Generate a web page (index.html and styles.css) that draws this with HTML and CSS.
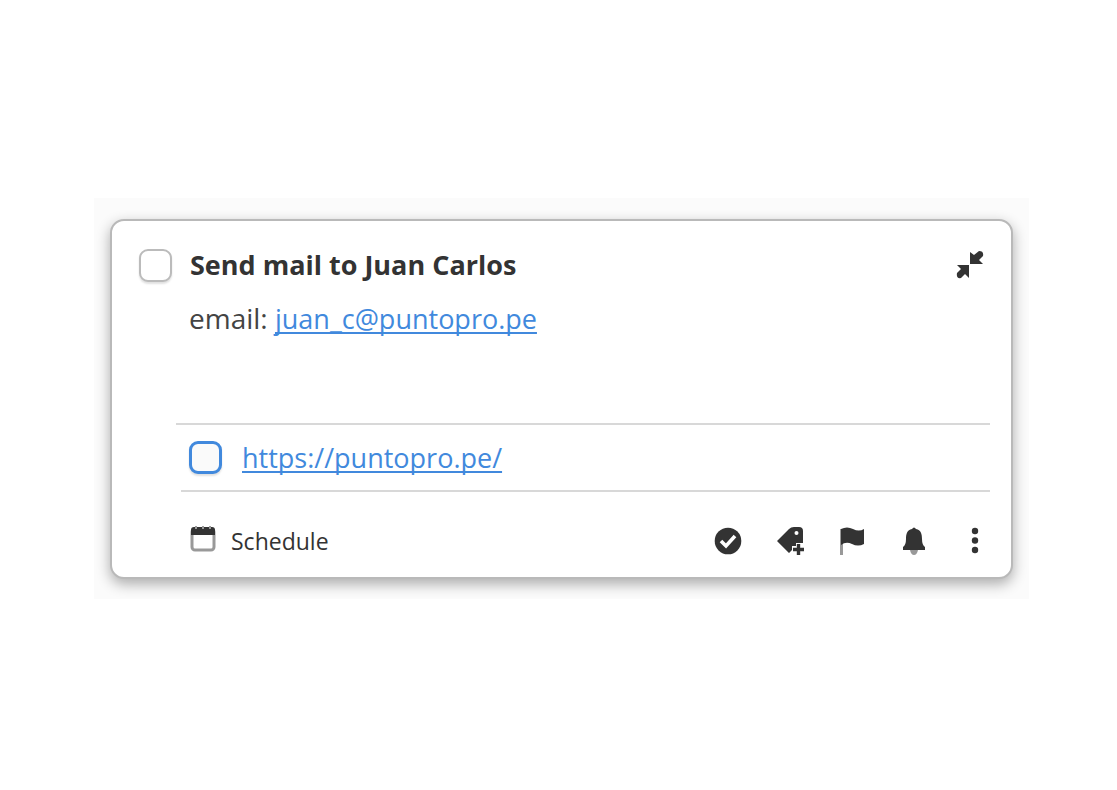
FILE: index.html
```html
<!DOCTYPE html>
<html lang="en">
<head>
    <meta charset="UTF-8">
    <meta name="viewport" content="width=device-width, initial-scale=1.0">
    <title>Send mail to Juan Carlos</title>
    <link rel="stylesheet" href="styles.css">
</head>
<body>
    <main class="backdrop">
        <article class="card">
            <header class="card-header">
                <input type="checkbox" class="check" id="task">
                <label for="task" class="card-title">Send mail to Juan Carlos</label>
                <button type="button" class="icon-button" aria-label="Collapse">
                    <svg class="icon" viewBox="0 0 28 28">
                        <path d="M14 1L18 4L23 0Q28 0 27 5L23 9L27 13H14ZM1 14H13V27L9 23L5 27Q0 28 1 22L5 18Z"/>
                    </svg>
                </button>
            </header>

            <p class="note">email: <a href="mailto:juan_c@puntopro.pe">juan_c@puntopro.pe</a></p>

            <div class="subtask">
                <input type="checkbox" class="check check-blue" aria-labelledby="subtask-link">
                <a href="https://puntopro.pe/" id="subtask-link">https://puntopro.pe/</a>
            </div>

            <footer class="card-footer">
                <button type="button" class="schedule">
                    <svg class="calendar" viewBox="0 0 26 30">
                        <rect x="2" y="3" width="22" height="21" rx="3" fill="#fff" stroke="#999" stroke-width="3"/>
                        <path d="M1 9V4Q1 1 4 1H22Q25 1 25 4V9Z"/>
                        <path d="M6 0V3M13 0V3M20 0V3" stroke="#999" stroke-width="2"/>
                    </svg>
                    Schedule
                </button>
                <div class="actions">
                    <button type="button" class="icon-button" aria-label="Complete">
                        <svg class="icon" viewBox="0 0 28 28">
                            <circle cx="14" cy="14" r="13.3"/>
                            <path d="M7 14L12 19L21 9" fill="none" stroke="#fff" stroke-width="3.6"/>
                        </svg>
                    </button>
                    <button type="button" class="icon-button" aria-label="Add tag">
                        <svg class="icon" viewBox="0 0 28 28">
                            <path d="M1 14L13 2Q15 0 18 0H23Q27 0 27 4V16H20V19H16V23L13 26Z"/>
                            <circle cx="20.5" cy="6" r="2" fill="#fff"/>
                            <path d="M22.500 17V28M17 22.500H28" stroke="#333" stroke-width="3.4"/>
                        </svg>
                    </button>
                    <button type="button" class="icon-button" aria-label="Set priority">
                        <svg class="icon" viewBox="0 0 28 28">
                            <path d="M3.500 2V28" stroke="#999" stroke-width="3"/>
                            <path d="M3 2Q9 -1 15 2T26 2V17Q20 20 14 17T3 18Z"/>
                        </svg>
                    </button>
                    <button type="button" class="icon-button" aria-label="Remind me">
                        <svg class="icon" viewBox="0 0 28 28">
                            <path d="M10 23H18Q17 28 14 28T10 23Z" fill="#999"/>
                            <path d="M12 2Q14 -1 16 2C21 3 22 7 22 12Q22 18 25 20V23H3V20Q6 18 6 12C6 7 7 3 12 2Z"/>
                        </svg>
                    </button>
                    <button type="button" class="icon-button" aria-label="More">
                        <svg class="icon" viewBox="0 0 28 28">
                            <circle cx="13" cy="4" r="3.2"/>
                            <circle cx="13" cy="13.500" r="3.2"/>
                            <circle cx="13" cy="23" r="3.2"/>
                        </svg>
                    </button>
                </div>
            </footer>
        </article>
    </main>
</body>
</html>
```
FILE: styles.css
```css
* {
    box-sizing: border-box;
}

body {
    margin: 0;
    padding: 198px 88px 0 94px;
    font-family: "Open Sans", "Noto Sans", sans-serif;
    font-size: 28px;
    line-height: 40px;
    color: #444;
    background: #fff;
}

.backdrop {
    padding: 21px 16px 20px;
    background: #fbfbfb;
    overflow: hidden;
}

.card {
    padding: 24px 21px 16px 27px;
    background: #fff;
    border: 2px solid #b9b9b9;
    border-radius: 14px;
    box-shadow: 0 5px 14px rgba(0, 0, 0, 0.32);
}

.card-header {
    display: flex;
    align-items: center;
    margin-right: 6px;
}

.card-title {
    flex: 1;
    margin-left: 18px;
    font-size: 27px;
    font-weight: 700;
    color: #333;
}

.check {
    appearance: none;
    flex: none;
    width: 33px;
    height: 33px;
    margin: 0;
    background: #fff;
    border: 2px solid #bbb;
    border-radius: 9px;
    box-shadow: 0 2px 2px rgba(0, 0, 0, 0.12);
}

.check-blue {
    background: #fafafa;
    border: 3px solid #4189dd;
}

a {
    font-size: 27px;
    color: #4189dd;
    text-decoration-thickness: 2px;
    text-decoration-skip-ink: none;
    text-underline-offset: 3px;
}

.note {
    min-height: 138px;
    margin: 0 0 0 50px;
    padding-top: 13px;
}

.subtask {
    display: flex;
    align-items: center;
    gap: 20px;
    height: 67px;
    margin-left: 37px;
    padding-left: 13px;
    border-top: 2px solid #d8d8d8;
}

.card-footer {
    display: flex;
    justify-content: space-between;
    align-items: center;
    margin-left: 42px;
    padding: 29px 0 0 9px;
    border-top: 2px solid #d8d8d8;
}

button {
    padding: 0;
    border: 0;
    background: none;
    font-family: inherit;
    color: #333;
}

.icon-button {
    display: flex;
}

.icon,
.calendar {
    fill: #333;
}

.icon {
    width: 28px;
    height: 28px;
}

.calendar {
    width: 26px;
    height: 30px;
}

.schedule {
    display: flex;
    align-items: center;
    gap: 15px;
    font-size: 23px;
    line-height: 40px;
}

.actions {
    display: flex;
    gap: 34px;
}
```
